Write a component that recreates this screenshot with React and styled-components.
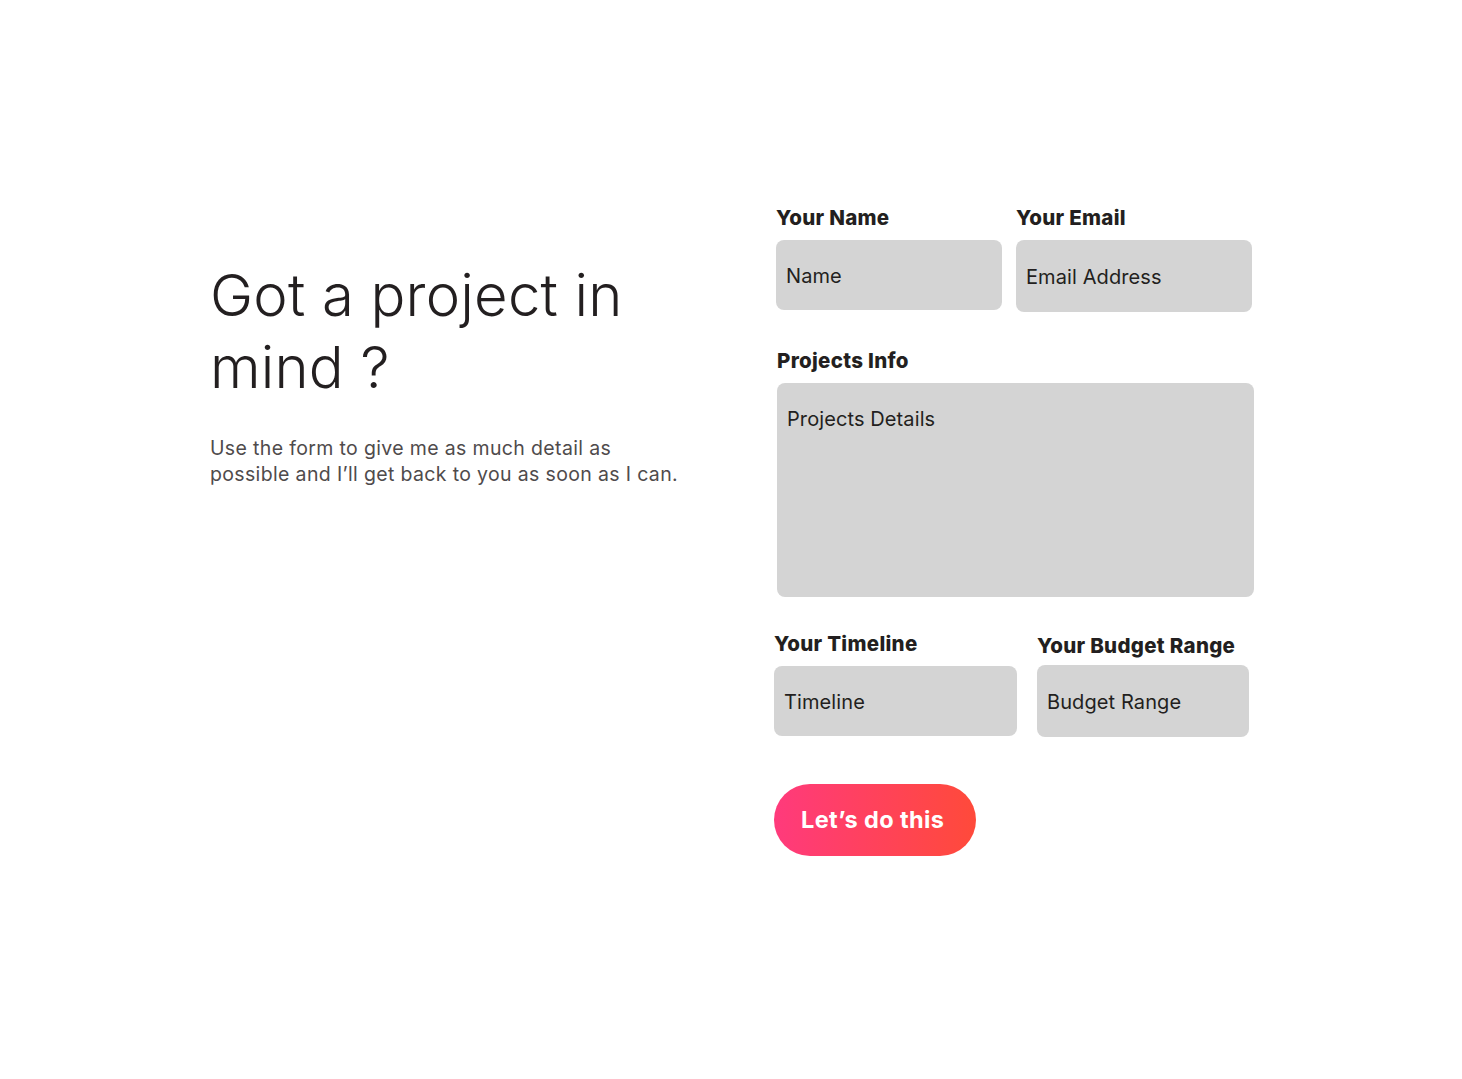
import React from 'react'
import styled, { createGlobalStyle } from 'styled-components'

const GlobalStyle = createGlobalStyle`
  body {
    margin: 0;
    background: #fff;
    font-family: Inter, "Noto Sans", "Liberation Sans", sans-serif;
    color: #231f20;
  }
`

const Page = styled.main`
  display: flex;
  align-items: flex-start;
  padding: 206px 0 0 210px;
  min-height: 1079px;
  box-sizing: border-box;
`

const Intro = styled.section`
  width: 490px;
  margin-top: 53px;
  margin-right: 76px;

  h1 {
    margin: 0;
    font-size: 58px;
    font-weight: 300;
    line-height: 72px;
    letter-spacing: 0.2px;
    color: #231f20;
  }

  p {
    max-width: 476px;
    margin: 32px 0 0;
    font-size: 19.5px;
    line-height: 26px;
    letter-spacing: 0.35px;
    color: #4f4b4c;
  }
`

const Form = styled.form`
  width: 478px;
  display: flex;
  flex-direction: column;
`

const Row = styled.div`
  display: grid;
  grid-template-columns: ${(p) => p.$cols || '1fr'};
  column-gap: ${(p) => p.$gap || 13}px;
  margin-top: ${(p) => p.$top || 0}px;
  margin-left: ${(p) => p.$shift || 0}px;
`

const Field = styled.label`
  display: flex;
  flex-direction: column;
  margin-top: ${(p) => p.$offset || 0}px;

  span {
    font-size: 20.5px;
    font-weight: 800;
    line-height: 24px;
    letter-spacing: 0.3px;
    white-space: nowrap;
    color: #231f20;
    margin-bottom: ${(p) => p.$gap || 10}px;
  }
`

const Input = styled.div`
  height: ${(p) => p.$h || 70}px;
  background: #d4d4d4;
  border-radius: 8px;
  box-sizing: border-box;
  padding: ${(p) => (p.$area ? '24px 10px' : '2px 10px 0')};
  display: flex;
  align-items: ${(p) => (p.$area ? 'flex-start' : 'center')};
  font-size: 20px;
  letter-spacing: 0.1px;
  color: #231f20;
`

const Submit = styled.button`
  margin-top: 47px;
  margin-left: -2px;
  width: 202px;
  height: 72px;
  border: none;
  border-radius: 36px;
  background: linear-gradient(90deg, #ff3a7c 0%, #ff4a3a 100%);
  color: #fff;
  font-family: inherit;
  font-size: 23.5px;
  font-weight: 700;
  letter-spacing: 0.4px;
  text-align: left;
  padding: 0 0 2px 27px;
  cursor: pointer;
`

export default function App() {
  return (
    <>
      <GlobalStyle />
      <Page>
        <Intro>
          <h1>
            Got a project in
            <br />
            mind ?
          </h1>
          <p>
            Use the form to give me as much detail as possible and I’ll get back to you as soon as I can.
          </p>
        </Intro>
        <Form>
          <Row $cols="226px 236px" $gap={14}>
            <Field>
              <span>Your Name</span>
              <Input>Name</Input>
            </Field>
            <Field>
              <span>Your Email</span>
              <Input $h={72}>Email Address</Input>
            </Field>
          </Row>
          <Row $top={37} $shift={1}>
            <Field>
              <span>Projects Info</span>
              <Input $h={214} $area>
                Projects Details
              </Input>
            </Field>
          </Row>
          <Row $cols="243px 212px" $gap={20} $top={35} $shift={-2}>
            <Field>
              <span>Your Timeline</span>
              <Input>Timeline</Input>
            </Field>
            <Field $offset={2} $gap={7}>
              <span>Your Budget Range</span>
              <Input $h={72}>Budget Range</Input>
            </Field>
          </Row>
          <Submit type="button">Let’s do this</Submit>
        </Form>
      </Page>
    </>
  )
}
